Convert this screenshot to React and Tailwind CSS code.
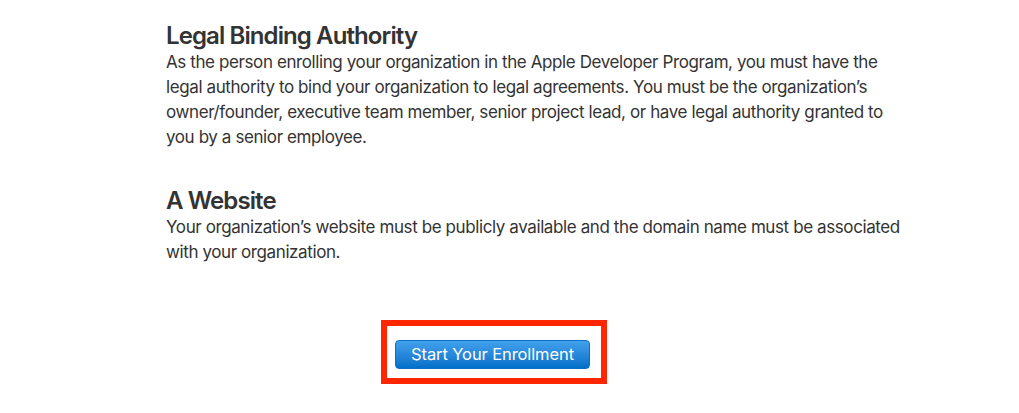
import React from "react";

const Section = ({ title, children, className = "" }) => (
  <section className={className}>
    <h2 className="text-[24px] leading-[23px] font-semibold text-[#333333] tracking-[-0.9px]">
      {title}
    </h2>
    <p className="mt-[3px] text-[17px] leading-[25px] text-[#333333] tracking-[-0.4px]">
      {children}
    </p>
  </section>
);

const App = () => {
  return (
    <div
      className="min-h-[413px] w-full bg-white"
      style={{ fontFamily: "Inter, 'Liberation Sans', sans-serif" }}
    >
      <div className="ml-[166px] pt-[24px] w-[740px]">
        <Section title="Legal Binding Authority">
          As the person enrolling your organization in the Apple Developer
          Program, you must have the legal authority to bind your organization
          to legal agreements. You must be the organization’s owner/founder,
          executive team member, senior project lead, or have legal authority
          granted to you by a senior employee.
        </Section>

        <Section title="A Website" className="mt-[39px]">
          Your organization’s website must be publicly available and the domain
          name must be associated with your organization.
        </Section>
      </div>

      {/* Highlighted enrollment button */}
      <div className="ml-[381px] mt-[55px] w-[226px] h-[64px] border-[6px] border-[#ff2600] pl-[8px] pt-[14px]">
        <button className="w-[195px] h-[29px] rounded-[4px] border border-[#0b6fca] bg-gradient-to-b from-[#42a1ec] to-[#0070c9] text-white text-[16.5px] leading-none tracking-[-0.1px]">
          Start Your Enrollment
        </button>
      </div>
    </div>
  );
};

export default App;
